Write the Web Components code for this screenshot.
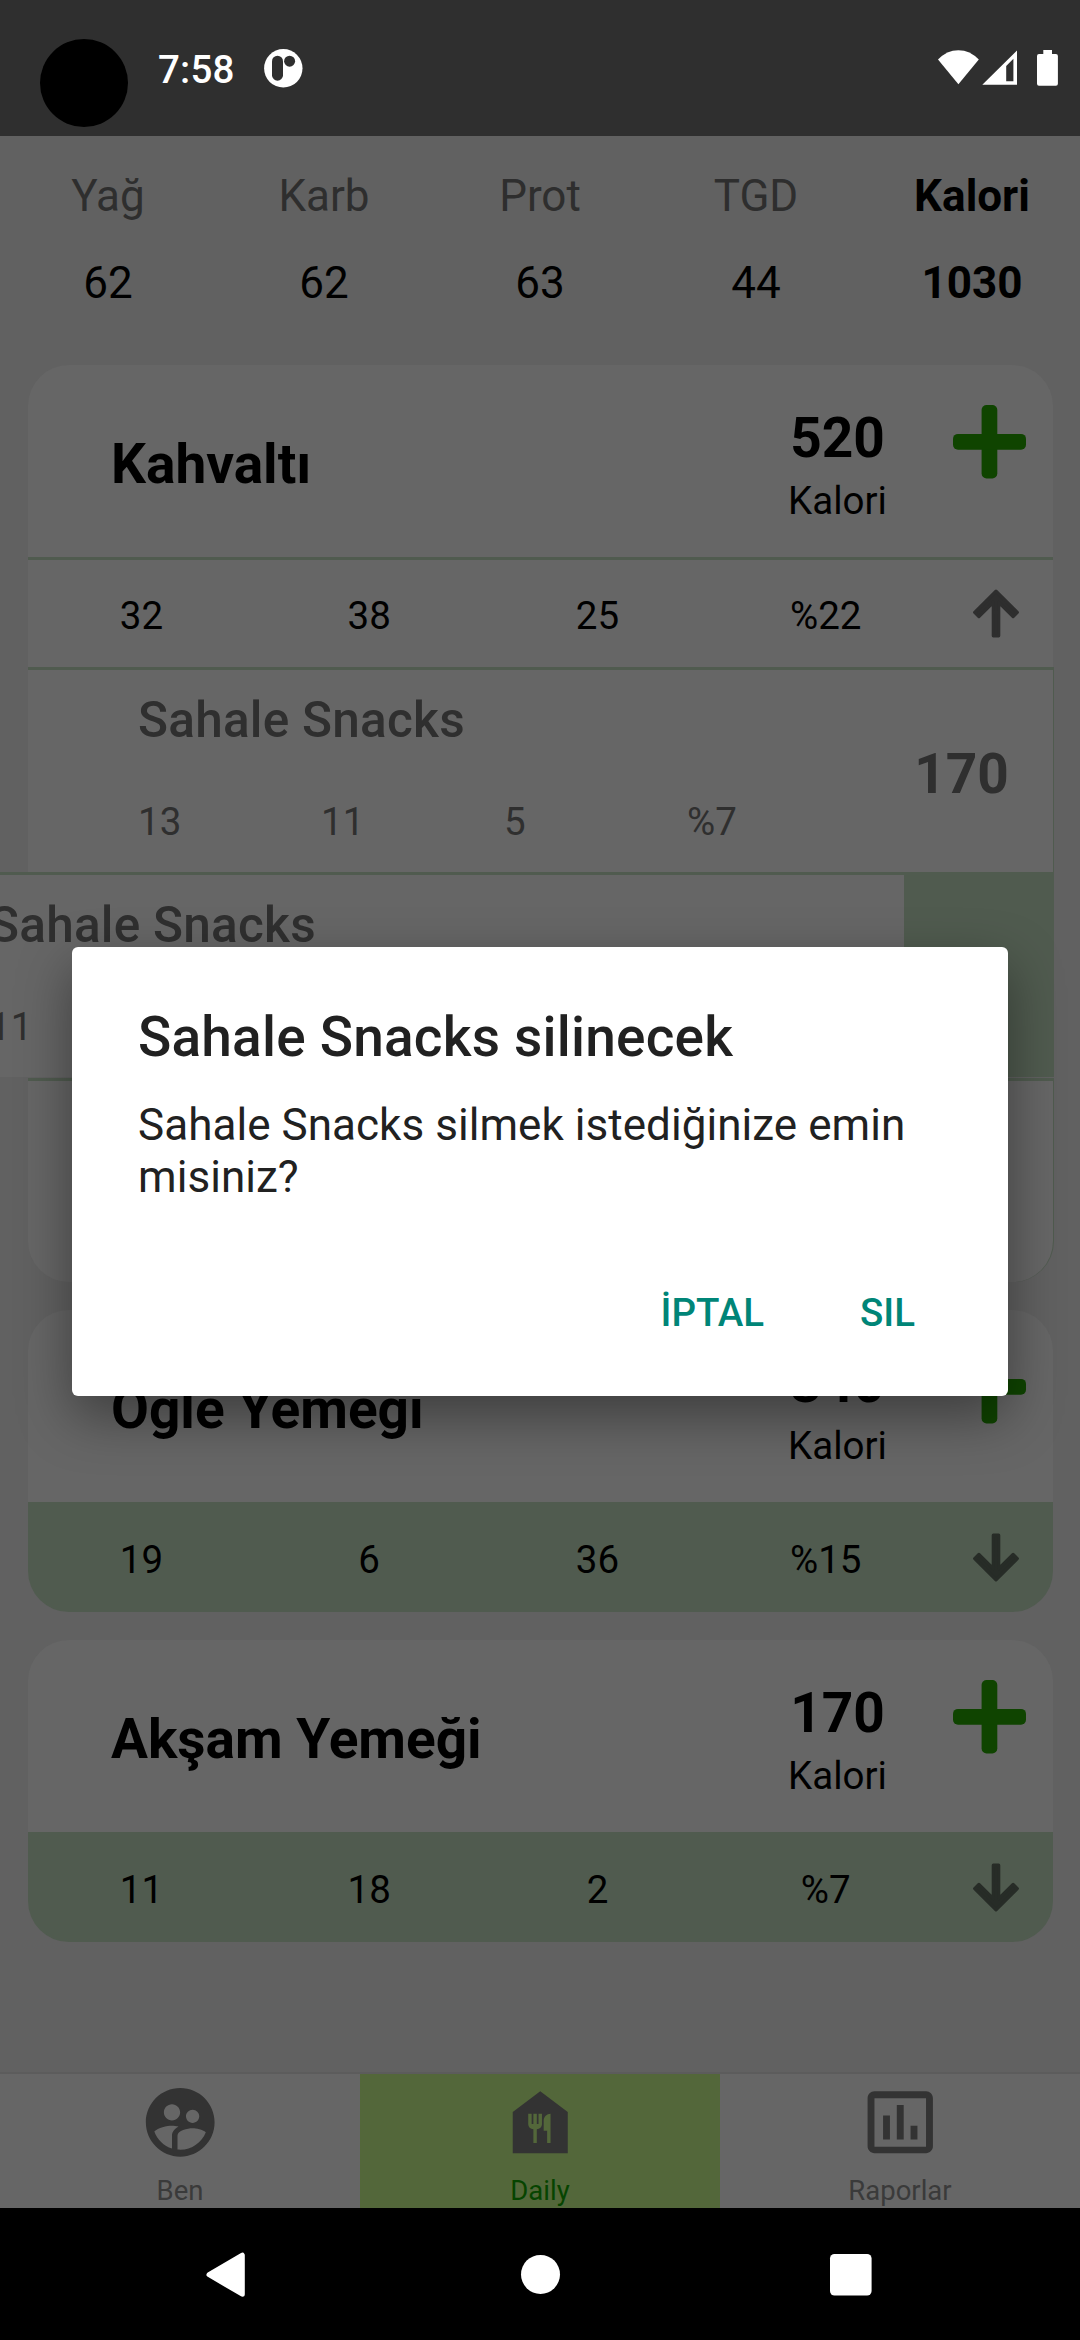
<!DOCTYPE html>
<html lang="tr">
<head>
<meta charset="utf-8">
<title>Daily</title>
<style>
html, body { margin: 0; padding: 0; background: #616161; }
body { width: 1080px; height: 2340px; overflow: hidden; font-family: Roboto, sans-serif; color: #000; }
</style>
</head>
<body>
<diary-screen></diary-screen>
<script>
const define = (name, render) => customElements.define(name, class extends HTMLElement {
  connectedCallback() {
    if (this.shadowRoot) return;
    const root = this.attachShadow({ mode: 'open' });
    root.innerHTML = render(this);
  }
});
const attr = (el, name) => el.getAttribute(name) || '';

define('status-bar', () => `
<style>
:host { display: flex; height: 136px; background: #2f2f2f; box-sizing: border-box; padding: 0 22px 0 40px; color: #fff; }
.camera { width: 88px; height: 88px; border-radius: 50%; background: #000; margin-top: 39px; }
time { font-size: 38.5px; font-weight: 500; line-height: 46px; margin: 47px 0 0 30px; width: 76px; white-space: nowrap; letter-spacing: .2px; }
svg { display: block; }
.app { margin: 49px 0 0 30px; }
.icons { margin: 50px 0 0 auto; }
</style>
<div class="camera"></div>
<time>7:58</time>
<svg class="app" width="39" height="39" viewBox="0 0 39 39">
  <circle cx="19.3" cy="19.3" r="19.2" fill="#fff"/>
  <rect x="8" y="6.7" width="11" height="25" rx="5.5" fill="#2f2f2f"/>
  <circle cx="25.6" cy="12.2" r="5.5" fill="#2f2f2f"/>
</svg>
<svg class="icons" width="120" height="38" viewBox="0 0 120 38" fill="#fff">
  <path d="M0 9.6Q8.7.2 20.4.2T40.8 9.6L20.4 34.3Z"/>
  <path fill-rule="evenodd" d="M79 .6V34.800H44.300Z M68.200 16V31.300H75.400V8.800Z"/>
  <path d="M105.300 0h8.700v4h3.900a2 2 0 0 1 2 2v27.700a2 2 0 0 1-2 2h-16.900a2 2 0 0 1-2-2V6a2 2 0 0 1 2-2h4.300z"/>
</svg>`);

define('total-cell', el => `
<style>
:host { display: flex; flex-direction: column; gap: 35px; width: 216px; padding-top: 34px; box-sizing: border-box; text-align: center; font-size: 44px; line-height: 52px; }
:host([strong]) { font-weight: 700; }
.label { color: #2e2e2e; }
:host([strong]) .label { color: #000; }
</style>
<div class="label">${attr(el, 'label')}</div><div><slot></slot></div>`);

define('add-icon', () => `
<style>:host, svg { display: block; }</style>
<svg width="73" height="74" viewBox="0 0 73 74" fill="#0f4400">
  <rect x="28.600" y="0" width="15.700" height="73.400" rx="5"/>
  <rect x="0" y="28.900" width="73" height="15.800" rx="5"/>
</svg>`);

define('arrow-icon', () => `
<style>
:host { display: block; color: #2e2e2e; }
:host([down]) { color: #272c27; }
svg { display: block; }
:host([down]) svg { transform: rotate(180deg); }
</style>
<svg width="56" height="56" viewBox="0 0 56 56">
  <path d="M28 6.100L6.700 27.400 10.900 31.600 25.300 17.300V50.800H30.700V17.300L45.100 31.600 49.300 27.400Z" fill="currentColor" stroke="currentColor" stroke-width="3.200" stroke-linejoin="round"/>
</svg>`);

define('meal-card', el => {
  const open = el.hasAttribute('open');
  return `
<style>
:host { display: block; width: 1025px; margin: 0 0 28px 28px; }
.head { display: flex; height: 192px; box-sizing: border-box; padding: 40px 27px 0 83px; background: #666; border-radius: 41px 41px 0 0; font-size: 55px; line-height: 64px; font-weight: 700; }
.name { flex: 1; padding-top: 27px; }
.energy { width: 140px; margin-right: 45.500px; padding-top: 1px; text-align: center; }
.energy small { display: block; margin-top: 8px; font-size: 38.500px; line-height: 46px; font-weight: 400; }
.band { display: flex; height: 110px; box-sizing: border-box; background: #505b4f; border-radius: 0 0 41px 41px; font-size: 38.500px; line-height: 46px; text-align: center; }
.band.open { background: #666; border-top: 3px solid #505b4f; border-radius: 0; }
.macro { width: 228.300px; padding-top: 35px; }
.macro:first-child { width: 227px; }
.open .macro { padding-top: 33px; }
.toggle { flex: 1; display: flex; justify-content: center; padding-top: 28px; }
.open .toggle { padding-top: 25px; }
.items { display: block; }
</style>
<div class="head">
  <div class="name">${attr(el, 'name')}</div>
  <div class="energy">${attr(el, 'energy')}<small>Kalori</small></div>
  <add-icon></add-icon>
</div>
<div class="band ${open ? 'open' : ''}">
  ${attr(el, 'macros').split(' ').map(v => `<div class="macro">${v}</div>`).join('')}
  <div class="toggle"><arrow-icon ${open ? '' : 'down'}></arrow-icon></div>
</div>
<div class="items"><slot></slot></div>`;
});

define('food-item', el => `
<style>
:host { display: block; width: 1026px; height: 205px; }
:host([swiped]) { height: 206px; }
:host([last]) { height: 204px; }
:host([swiped]) { background: linear-gradient(#505b4f, #505b4f) right top / 160px 205px no-repeat; }
.row { display: flex; height: 100%; box-sizing: border-box; background: #666; border-top: 3px solid #505b4f; border-right: 1px solid #505b4f; padding-left: 110px; color: #2f2f2f; }
:host([swiped]) .row { transform: translateX(-149px); height: 205px; }
:host([last]) .row { border-radius: 0 0 41px 41px; }
.info { width: 732px; padding-top: 21px; }
.name { font-size: 49.500px; line-height: 58px; font-weight: 500; letter-spacing: .25px; }
.macros { display: flex; margin-top: 49.500px; font-size: 38.500px; line-height: 46px; }
.macros div { width: 183px; }
.energy { width: 185px; padding-top: 72px; text-align: center; font-size: 55px; line-height: 64px; font-weight: 700; }
</style>
<div class="row">
  <div class="info">
    <div class="name"><slot></slot></div>
    <div class="macros">${attr(el, 'macros').split(' ').map(v => `<div>${v}</div>`).join('')}</div>
  </div>
  <div class="energy">${attr(el, 'energy')}</div>
</div>`);

const TAB_ICONS = {
  people: 'M11.990 2c-5.520 0-10 4.480-10 10s4.480 10 10 10 10-4.480 10-10-4.480-10-10-10zm3.610 6.340c1.070 0 1.930.860 1.930 1.930 0 1.070-.860 1.930-1.930 1.930-1.070 0-1.930-.860-1.930-1.930-.010-1.070.860-1.930 1.930-1.930zm-6-1.580c1.300 0 2.360 1.060 2.360 2.360 0 1.300-1.060 2.360-2.360 2.360s-2.360-1.060-2.360-2.360c0-1.310 1.050-2.360 2.360-2.360zm0 9.130v3.750c-2.400-.750-4.300-2.600-5.140-4.960 1.050-1.120 3.670-1.690 5.140-1.690.530 0 1.200.080 1.900.220-1.640.870-1.900 2.020-1.900 2.680zM11.990 20c-.270 0-.530-.010-.790-.040v-4.070c0-1.420 2.940-2.130 4.400-2.130 1.070 0 2.920.390 3.840 1.150-1.170 2.970-4.060 5.090-7.450 5.090z',
  food: 'M12 3L4 9v12h16V9l-8-6zm.5 9.5c0 .83-.67 1.5-1.5 1.5v4h-1v-4c-.83 0-1.5-.67-1.500-1.500v-3h1v3h.5v-3h1v3h.5v-3h1v3zM15 18h-1v-3.500h-1v-3c0-1.100.900-2 2-2V18z',
  chart: 'M9 17H7v-7h2v7zm4 0h-2V7h2v10zm4 0h-2v-4h2v4zm2.500 2.100h-15V5h15v14.100zm0-16.100h-15c-1.100 0-2 .9-2 2v14c0 1.100.9 2 2 2h15c1.100 0 2-.9 2-2V5c0-1.100-.9-2-2-2z'
};
define('tab-item', el => `
<style>
:host { flex: 1; display: flex; flex-direction: column; align-items: center; gap: 11px; padding-top: 6.500px; background: #666; color: #3a3a3a; font-size: 27.500px; line-height: 34px; }
:host([active]) { background: #53673a; color: #064400; }
svg { display: block; fill: #333; }
</style>
<svg width="82.500" height="82.500" viewBox="0 0 24 24"><path fill-rule="evenodd" d="${TAB_ICONS[attr(el, 'icon')]}"/></svg>
<div><slot></slot></div>`);

define('tab-bar', () => `
<style>:host { display: flex; height: 136px; box-sizing: border-box; border-top: 2px solid #5c5c5c; }</style>
<slot></slot>`);

define('system-nav', () => `
<style>
:host { display: flex; height: 132px; background: #000; }
svg { display: block; }
</style>
<svg width="1080" height="132" viewBox="0 0 1080 132" fill="#fff">
  <path d="M209 66.700L242.300 47.200V86.200Z" stroke="#fff" stroke-width="5" stroke-linejoin="round"/>
  <circle cx="540.500" cy="66.400" r="19.500"/>
  <rect x="830" y="46" width="41.600" height="41.600" rx="4.500"/>
</svg>`);

define('confirm-dialog', el => `
<style>
:host { position: absolute; left: 72px; top: 947px; width: 936px; height: 449px; box-sizing: border-box; padding: 58px 66px 0; display: flex; flex-direction: column; background: #fff; border-radius: 6px; color: #212121; box-shadow: 0 20px 54px rgba(0,0,0,.4); }
h2 { margin: 0; font-size: 55px; line-height: 64px; font-weight: 500; white-space: nowrap; letter-spacing: .2px; }
p { margin: 30px 0 0; font-size: 44px; line-height: 52px; letter-spacing: .05px; }
.actions { display: flex; gap: 96px; justify-content: flex-end; margin: 87px 27px 0 0; font-size: 38.500px; line-height: 46px; font-weight: 500; color: #008577; }
</style>
<h2>${attr(el, 'heading')}</h2>
<p><slot></slot></p>
<div class="actions"><div>İPTAL</div><div>SIL</div></div>`);

define('diary-screen', () => `
<style>
:host { display: block; position: relative; width: 1080px; height: 2340px; overflow: hidden; background: #616161; }
.screen { display: flex; flex-direction: column; height: 100%; }
.totals { display: flex; height: 229px; }
main { flex: 1; }
</style>
<div class="screen">
  <status-bar></status-bar>
  <div class="totals">
    <total-cell label="Yağ">62</total-cell>
    <total-cell label="Karb">62</total-cell>
    <total-cell label="Prot">63</total-cell>
    <total-cell label="TGD">44</total-cell>
    <total-cell label="Kalori" strong>1030</total-cell>
  </div>
  <main>
    <meal-card name="Kahvaltı" energy="520" macros="32 38 25 %22" open>
      <food-item macros="13 11 5 %7" energy="170">Sahale Snacks</food-item>
      <food-item macros="11" swiped>Sahale Snacks</food-item>
      <food-item last></food-item>
    </meal-card>
    <meal-card name="Öğle Yemeği" energy="340" macros="19 6 36 %15"></meal-card>
    <meal-card name="Akşam Yemeği" energy="170" macros="11 18 2 %7"></meal-card>
  </main>
  <tab-bar>
    <tab-item icon="people">Ben</tab-item>
    <tab-item icon="food" active>Daily</tab-item>
    <tab-item icon="chart">Raporlar</tab-item>
  </tab-bar>
  <system-nav></system-nav>
</div>
<confirm-dialog heading="Sahale Snacks silinecek">Sahale Snacks silmek istediğinize emin misiniz?</confirm-dialog>`);
</script>
</body>
</html>
